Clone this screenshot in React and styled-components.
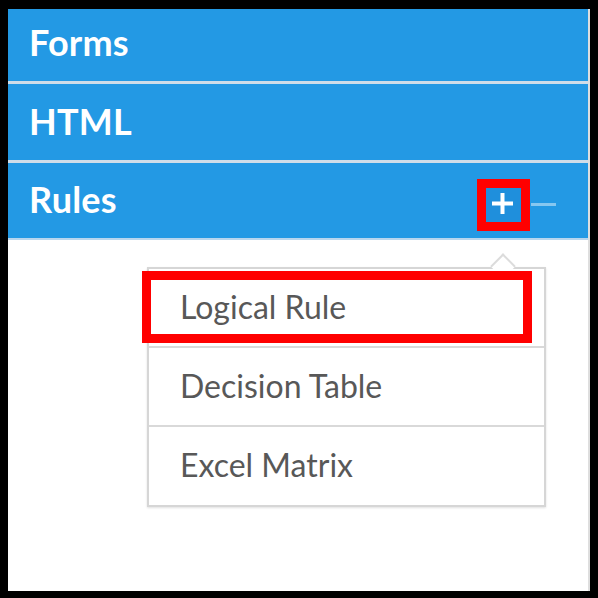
import styled, { createGlobalStyle } from "styled-components";

const GlobalStyle = createGlobalStyle`
  html, body {
    margin: 0;
    padding: 0;
    background: #000;
  }
  body {
    font-family: Lato, "Open Sans", sans-serif;
  }
`;

export const Frame = styled.div`
  width: 598px;
  height: 598px;
  box-sizing: border-box;
  padding: 9px 8px 7px 8px;
  background: #000;
`;

export const Panel = styled.div`
  width: 582px;
  height: 582px;
  box-sizing: border-box;
  background: #fff;
  border-right: 2px solid #dedede;
  overflow: hidden;
`;

export const Header = styled.div`
  display: flex;
  align-items: center;
  justify-content: space-between;
  box-sizing: border-box;
  height: ${(p) => p.$h}px;
  margin-top: ${(p) => p.$offset || 0}px;
  padding: 0 32px 3px 21px;
  background: #2399e4;
  border-bottom: ${(p) => (p.$last ? "2px solid #b8d6ee" : "3px solid #cfdde9")};
  color: #fff;
  font-size: 36px;
  font-weight: 700;
  letter-spacing: 0.2px;
`;

export const Controls = styled.div`
  display: flex;
  align-items: center;
  gap: 10px;
  align-self: flex-end;
  margin-bottom: 13px;
`;

export const AddButton = styled.div`
  width: 35px;
  height: 34px;
  display: flex;
  align-items: center;
  justify-content: center;
  background: #1f8fdc;
  outline: 9px solid #ff0000;
  cursor: pointer;
`;

export const Minus = styled.div`
  width: 25px;
  height: 3px;
  margin-top: -2px;
  background: rgba(255, 255, 255, 0.45);
`;

export const MenuArea = styled.div`
  padding: 27px 0 0 139px;
`;

export const Menu = styled.div`
  position: relative;
  width: 399px;
  box-sizing: border-box;
  background: #fff;
  border: 2px solid #d6d6d6;
  box-shadow: 0 1px 2px rgba(0, 0, 0, 0.12);
`;

export const Caret = styled.div`
  position: absolute;
  top: -12px;
  left: 345px;
  width: 18px;
  height: 18px;
  box-sizing: border-box;
  background: #fff;
  border-top: 2px solid #dcdcdc;
  border-left: 2px solid #dcdcdc;
  transform: rotate(45deg);
`;

export const Item = styled.div`
  position: relative;
  display: flex;
  align-items: center;
  height: ${(p) => (p.$last ? 78 : 79)}px;
  padding-left: 31px;
  padding-bottom: 3px;
  box-sizing: border-box;
  border-bottom: ${(p) => (p.$last ? "none" : "2px solid #d9d9d9")};
  color: #585858;
  font-size: 32px;
  font-weight: 400;
  cursor: pointer;

  ${(p) =>
    p.$marked &&
    `
    &::after {
      content: "";
      position: absolute;
      left: -7px;
      right: 12px;
      top: 2px;
      bottom: 3px;
      border: 9px solid #ff0000;
    }
  `}
`;

const PlusIcon = () => (
  <svg width="21" height="21" viewBox="0 0 21 21" style={{ marginLeft: -2, marginTop: -4 }}>
    <rect x="8.5" y="0" width="4" height="21" fill="#fff" />
    <rect x="0" y="8.5" width="21" height="4" fill="#fff" />
  </svg>
);

const items = ["Logical Rule", "Decision Table", "Excel Matrix"];

export default function App() {
  return (
    <>
      <GlobalStyle />
      <Frame>
        <Panel>
          <Header $h={79} $offset={-4}>Forms</Header>
          <Header $h={79}>HTML</Header>
          <Header $h={77} $last>
            Rules
            <Controls>
              <AddButton>
                <PlusIcon />
              </AddButton>
              <Minus />
            </Controls>
          </Header>
          <MenuArea>
            <Menu>
              <Caret />
              {items.map((label, i) => (
                <Item key={label} $marked={i === 0} $last={i === items.length - 1}>
                  {label}
                </Item>
              ))}
            </Menu>
          </MenuArea>
        </Panel>
      </Frame>
    </>
  );
}
